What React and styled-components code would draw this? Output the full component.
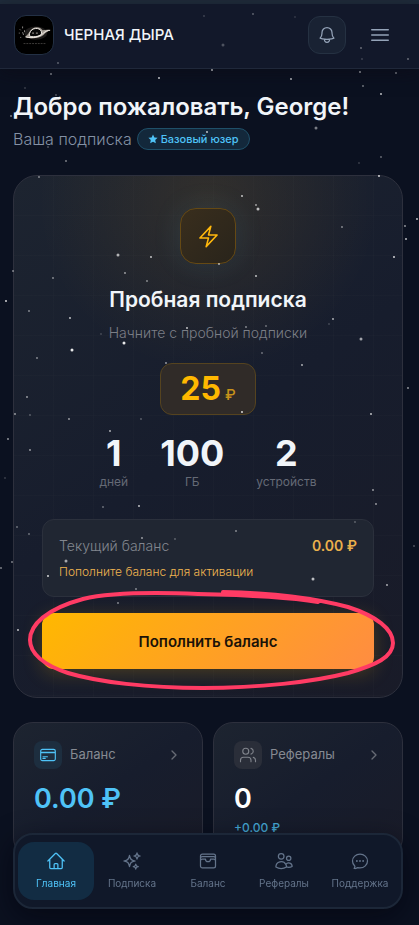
// src/App.jsx
import React from 'react';
import styled, { createGlobalStyle, css } from 'styled-components';
import {
  HiOutlineBell,
  HiOutlineBars3,
  HiOutlineBolt,
  HiOutlineChatBubbleOvalLeftEllipsis,
  HiOutlineCreditCard,
  HiOutlineHome,
  HiOutlineSparkles,
  HiOutlineUsers,
  HiOutlineWallet,
} from 'react-icons/hi2';
import { ChevronRight, Users } from 'lucide-react';

const GlobalStyle = createGlobalStyle`
  *, *::before, *::after {
    box-sizing: border-box;
  }

  body {
    margin: 0;
    background: #0b1120;
    color: #f1f5f9;
    font-family: Inter, 'Noto Sans', sans-serif;
    line-height: 1.5;
  }

  h1, h2, p, dl, dd {
    margin: 0;
  }

  button {
    font-family: inherit;
    cursor: pointer;
  }

  a {
    color: inherit;
    text-decoration: none;
  }
`;

const Page = styled.div`
  border-top: 4px solid #1f2c3b;
  padding-bottom: 110px;
`;

const Sky = styled.svg`
  position: fixed;
  inset: 0;
  z-index: 5;
  width: 100%;
  height: 100%;
  pointer-events: none;
  fill: #fff;
`;

const Header = styled.header`
  display: flex;
  align-items: center;
  height: 65px;
  padding: 0 20px 2px 14px;
  background: #12182a;
  border-bottom: 1px solid #20283a;
  box-shadow: 0 4px 16px rgba(12, 10, 20, 0.5);
`;

const Brand = styled.a`
  display: flex;
  align-items: center;
  gap: 10px;
  margin-right: auto;
  font-size: 15px;
  font-weight: 500;
`;

const Logo = styled.svg`
  width: 40px;
  height: 40px;
  border: 1px solid #233044;
  border-radius: 12px;
  background: #000;
`;

const IconButton = styled.button`
  display: grid;
  place-items: center;
  width: 38px;
  height: 38px;
  padding: 0;
  border: 1px solid ${(props) => (props.$filled ? '#253142' : 'transparent')};
  border-radius: 12px;
  background: ${(props) => (props.$filled ? '#192233' : 'transparent')};
  color: #94a3b8;
  font-size: ${(props) => (props.$filled ? '20px' : '24px')};

  & + & {
    margin-left: 15px;
  }
`;

const Main = styled.main`
  padding: 21px 16px 0 13px;
`;

const Greeting = styled.h1`
  font-size: 24px;
  font-weight: 600;
  line-height: 34px;
`;

const PlanLine = styled.div`
  display: flex;
  align-items: center;
  gap: 5px;
  margin-top: 4px;
  color: #8491a5;
  font-size: 16px;
  font-weight: 300;
  line-height: 22px;
`;

const Badge = styled.span`
  display: inline-flex;
  align-items: center;
  gap: 3px;
  height: 22px;
  padding: 0 10px;
  border: 1px solid #1f5069;
  border-radius: 11px;
  background: #13283b;
  color: #4fc3f7;
  font-size: 11px;
  font-weight: 500;

  svg {
    width: 10px;
    height: 10px;
    fill: currentColor;
  }
`;

const glass = css`
  border: 1px solid #2d303d;
  background: linear-gradient(145deg, #1d2430 0%, #171d2d 50%, #191b28 100%);
`;

const TrialCard = styled.section`
  ${glass}
  display: flex;
  flex-direction: column;
  align-items: center;
  margin-top: 25px;
  padding: 32px 28px 28px;
  border-radius: 24px;
  background:
    repeating-linear-gradient(90deg, transparent 0 39px, rgba(255, 255, 255, 0.01) 39px 40px),
    repeating-linear-gradient(transparent 0 39px, rgba(255, 255, 255, 0.01) 39px 40px),
    radial-gradient(circle at 50% 25px, rgba(255, 170, 20, 0.1), rgba(255, 170, 20, 0) 170px),
    linear-gradient(145deg, #1d2430 0%, #171d2d 50%, #191b28 100%);
`;

const BoltTile = styled.div`
  display: grid;
  place-items: center;
  width: 56px;
  height: 56px;
  border: 1px solid #654914;
  border-radius: 16px;
  background: linear-gradient(135deg, #392e1d, #29241b);
  box-shadow: 0 0 30px rgba(79, 195, 247, 0.1);
  color: #ffb80c;
  font-size: 25px;
`;

const CardTitle = styled.h2`
  margin-top: 20px;
  font-size: 21px;
  font-weight: 600;
  line-height: 32px;
`;

const CardHint = styled.p`
  margin-top: 7px;
  color: #7b7e86;
  font-size: 14px;
  font-weight: 300;
  line-height: 20px;
`;

const Price = styled.p`
  display: flex;
  align-items: baseline;
  gap: 4px;
  margin-top: 20px;
  padding: 0 19px;
  border: 1px solid #55431f;
  border-radius: 12px;
  background: #302b28;
  color: #ffb800;
  font-size: 32px;
  font-weight: 700;
  line-height: 50px;

  small {
    color: #c7921a;
    font-size: 15px;
    font-weight: 500;
    line-height: 16px;
  }
`;

const Stats = styled.dl`
  display: flex;
  justify-content: center;
  gap: 32px;
  margin-top: 18px;
`;

const Stat = styled.div`
  display: flex;
  flex-direction: column-reverse;
  align-items: center;

  dt {
    color: #656a76;
    font-size: 12px;
    line-height: 18px;
  }

  dd {
    font-size: 36px;
    font-weight: 700;
    line-height: 40px;
  }
`;

const BalanceBox = styled.div`
  align-self: stretch;
  margin-top: 28px;
  padding: 15px 16px;
  border: 1px solid #2b303c;
  border-radius: 12px;
  background: #202632;
`;

const BalanceRow = styled.div`
  display: flex;
  justify-content: space-between;
  color: #82868f;
  font-size: 14px;
  font-weight: 300;
  line-height: 22px;

  strong {
    color: #eab04c;
    font-weight: 600;
  }
`;

const Warning = styled.p`
  margin-top: 6px;
  color: #f0b550;
  font-size: 12px;
  font-weight: 300;
  line-height: 18px;
`;

const TopUp = styled.div`
  position: relative;
  align-self: stretch;
  margin-top: 16px;
`;

const TopUpButton = styled.button`
  display: block;
  width: 100%;
  height: 56px;
  border: 0;
  border-radius: 12px;
  background: linear-gradient(135deg, #ffb800, #ff8c42);
  box-shadow: 0 4px 20px rgba(255, 184, 0, 0.22);
  color: #1a1208;
  font-size: 15px;
  font-weight: 600;
`;

const Marker = styled.svg`
  position: absolute;
  top: -26px;
  left: -24px;
  z-index: 6;
  width: calc(100% + 48px);
  height: calc(100% + 52px);
  pointer-events: none;
  fill: none;
  stroke: #ff3b64;
  stroke-width: 4;
  stroke-linecap: round;
`;

const Tiles = styled.div`
  display: grid;
  grid-template-columns: 1fr 1fr;
  gap: 10px;
  margin-top: 24px;
`;

const Tile = styled.a`
  ${glass}
  min-height: 136px;
  padding: 18px 20px;
  border-radius: 20px;
`;

const TileHead = styled.div`
  display: flex;
  align-items: center;
  gap: 8px;
  color: #868a92;
  font-size: 13px;

  > svg {
    margin-left: auto;
    color: #676b75;
  }
`;

const TileIcon = styled.span`
  display: grid;
  place-items: center;
  width: 28px;
  height: 28px;
  border-radius: 8px;
  background: ${(props) => (props.$accent ? '#1d2e3f' : '#2a2e39')};
  color: ${(props) => (props.$accent ? '#4fc3f7' : '#80848c')};
  font-size: 18px;
`;

const TileValue = styled.p`
  margin-top: 12px;
  color: ${(props) => (props.$accent ? '#4fc3f7' : '#fff')};
  font-size: 27px;
  font-weight: 600;
  line-height: 36px;
`;

const TileNote = styled.p`
  margin-top: 1px;
  color: #45a8d5;
  font-size: 12px;
  font-weight: 500;
  line-height: 20px;
`;

const Nav = styled.nav`
  position: fixed;
  right: 16px;
  bottom: 16px;
  left: 13px;
  z-index: 10;
  display: grid;
  grid-template-columns: repeat(5, 1fr);
  padding: 7px 3px;
  border: 2px solid #1c2738;
  border-radius: 20px;
  background: #101829;
  box-shadow: 0 8px 28px rgba(4, 4, 14, 0.6);
`;

const NavLink = styled.a`
  display: flex;
  flex-direction: column;
  align-items: center;
  justify-content: center;
  gap: 4px;
  height: 58px;
  border-radius: 16px;
  background: ${(props) => (props.$active ? '#122c43' : 'transparent')};
  color: ${(props) => (props.$active ? '#4fc3f7' : '#64748b')};
  font-size: 10px;
  line-height: 16px;

  svg {
    width: 20px;
    height: 20px;
  }
`;

// x, y, size, opacity
const stars = [
  [253, 14, 1, 0.35], [223, 45, 2, 0.25], [204, 16, 1, 0.2], [295, 17, 1, 0.15], [361, 48, 1, 0.4],
  [362, 59, 1, 0.2], [408, 59, 1, 0.4], [58, 63, 1, 0.35], [51, 74, 1, 0.45], [212, 70, 1, 0.65],
  [360, 72, 1, 0.5], [396, 73, 1, 0.4], [159, 78, 1, 0.8], [291, 79, 1, 0.7], [363, 86, 1, 0.45],
  [381, 94, 1, 0.8], [25, 88, 1, 0.2], [56, 95, 1, 0.3], [11, 116, 1, 0.5], [51, 108, 1, 0.7],
  [316, 128, 2, 0.45], [207, 132, 1, 0.8], [48, 147, 1, 0.3], [381, 157, 1, 0.4], [66, 161, 1, 0.5],
  [359, 163, 1, 0.2], [39, 177, 1, 0.5], [379, 176, 1, 0.9], [242, 196, 1, 0.8], [256, 205, 1, 0.6],
  [258, 209, 2, 0.7], [342, 227, 1, 0.5], [417, 219, 1, 0.8], [405, 226, 1, 0.6], [406, 239, 1, 0.8],
  [394, 257, 1, 0.9], [118, 255, 2, 0.65], [151, 257, 1, 0.8], [125, 273, 1, 0.6], [147, 281, 1, 0.5],
  [219, 264, 1, 0.7], [256, 276, 1, 0.8], [13, 271, 1, 0.5], [53, 278, 1, 0.5], [6, 301, 1, 0.9],
  [29, 311, 1, 0.5], [70, 318, 1, 0.8], [187, 328, 1, 0.8], [101, 334, 1, 0.2], [246, 327, 1, 0.5],
  [266, 326, 1, 0.4], [333, 319, 1, 0.7], [329, 324, 1, 0.2], [361, 339, 2, 0.6], [124, 343, 2, 0.9],
  [72, 350, 2, 0.9], [37, 358, 1, 0.5], [262, 353, 1, 0.4], [166, 363, 1, 0.6], [302, 365, 1, 0.7],
  [27, 397, 1, 0.6], [30, 415, 1, 0.3], [15, 414, 1, 0.6], [69, 419, 1, 0.6], [141, 419, 1, 0.3],
  [242, 412, 1, 0.9], [371, 414, 1, 0.8], [408, 388, 1, 0.6], [110, 431, 1, 0.7], [8, 439, 1, 0.6],
  [30, 450, 1, 0.6], [5, 478, 1, 0.2], [373, 490, 1, 0.6], [376, 504, 1, 0.6], [103, 507, 1, 0.4],
  [139, 506, 1, 0.8], [17, 527, 1, 0.4], [29, 534, 1, 0.4], [236, 531, 1, 0.5], [355, 522, 1, 0.3],
  [142, 538, 1, 0.6], [175, 539, 1, 0.3], [414, 546, 1, 0.3], [66, 561, 2, 0.6], [12, 562, 1, 0.5],
  [48, 576, 1, 0.9], [136, 589, 1, 0.5], [118, 603, 1, 0.5], [313, 579, 2, 0.7], [387, 585, 1, 0.7],
  [1, 568, 1, 0.5], [18, 630, 1, 0.8],
];

const stats = [
  { value: '1', label: 'дней' },
  { value: '100', label: 'ГБ' },
  { value: '2', label: 'устройств' },
];

const links = [
  { label: 'Главная', icon: HiOutlineHome, active: true },
  { label: 'Подписка', icon: HiOutlineSparkles },
  { label: 'Баланс', icon: HiOutlineWallet },
  { label: 'Рефералы', icon: HiOutlineUsers },
  { label: 'Поддержка', icon: HiOutlineChatBubbleOvalLeftEllipsis },
];

const BlackHoleLogo = () => (
  <Logo viewBox="0 0 40 40" aria-hidden="true">
    <ellipse cx="22" cy="18" rx="12" ry="7" fill="#1d1b1a" />
    <path d="M11 22c1-2 3-3 4-5 3-6 11-7 14-2 2 0 5-1 8 0-3 1-5 3-7 5-5 4-13 4-19 2z" fill="#a39c94" />
    <path d="M15 21c0-10 13-10 13-3 0 3-8 5-13 3z" fill="#080808" stroke="#eeeae4" />
    <path d="M11 22c8 2 15 0 19-4 2-2 5-3 7-3" fill="none" stroke="#f4eee8" />
    <path d="M5 14l1 1M8 11v2M4 18h1M8 17l1 3M6 22v1M10 15v2" stroke="#8b8885" />
    <path d="M18 18h2M22 18h2" stroke="#b3aca5" />
    <path d="M9 29h23" stroke="#3f3d3b" strokeDasharray="2 1" />
  </Logo>
);

const App = () => {
  return (
    <>
      <GlobalStyle />
      <Sky aria-hidden="true">
        {stars.map(([x, y, size, opacity]) => (
          <circle key={`${x}-${y}`} cx={x} cy={y} r={size === 2 ? 1.5 : 0.9} opacity={opacity} />
        ))}
      </Sky>
      <Page>
        <Header>
          <Brand href="#home">
            <BlackHoleLogo />
            ЧЕРНАЯ ДЫРА
          </Brand>
          <IconButton $filled type="button" aria-label="Уведомления">
            <HiOutlineBell />
          </IconButton>
          <IconButton type="button" aria-label="Меню">
            <HiOutlineBars3 />
          </IconButton>
        </Header>

        <Main>
          <Greeting>Добро пожаловать, George!</Greeting>
          <PlanLine>
            Ваша подписка
            <Badge>
              <svg viewBox="0 0 24 24" aria-hidden="true">
                <path d="M12 1l3.3 7.2 7.7.9-5.7 5.3 1.5 7.7L12 18.3 5.2 22.1l1.5-7.7L1 9.1l7.7-.9z" />
              </svg>
              Базовый юзер
            </Badge>
          </PlanLine>

          <TrialCard>
            <BoltTile>
              <HiOutlineBolt />
            </BoltTile>
            <CardTitle>Пробная подписка</CardTitle>
            <CardHint>Начните с пробной подписки</CardHint>
            <Price>
              25<small>₽</small>
            </Price>
            <Stats>
              {stats.map((stat) => (
                <Stat key={stat.label}>
                  <dt>{stat.label}</dt>
                  <dd>{stat.value}</dd>
                </Stat>
              ))}
            </Stats>
            <BalanceBox>
              <BalanceRow>
                <span>Текущий баланс</span>
                <strong>0.00 ₽</strong>
              </BalanceRow>
              <Warning>Пополните баланс для активации</Warning>
            </BalanceBox>
            <TopUp>
              <TopUpButton type="button">Пополнить баланс</TopUpButton>
              <Marker viewBox="0 0 380 108" preserveAspectRatio="none" aria-hidden="true">
                <path d="M205 5C255 6 300 12 330 20C358 29 375 42 375 56C375 70 358 78 330 86C295 95 240 101 185 101C130 101 80 95 50 86C25 78 12 66 12 53C12 38 28 22 65 12C90 6 130 5 180 7C230 8 270 10 300 15" />
              </Marker>
            </TopUp>
          </TrialCard>

          <Tiles>
            <Tile href="#balance">
              <TileHead>
                <TileIcon $accent>
                  <HiOutlineCreditCard />
                </TileIcon>
                Баланс
                <ChevronRight size={16} />
              </TileHead>
              <TileValue $accent>0.00 ₽</TileValue>
            </Tile>
            <Tile href="#referrals">
              <TileHead>
                <TileIcon>
                  <Users size={18} strokeWidth={1.5} />
                </TileIcon>
                Рефералы
                <ChevronRight size={16} />
              </TileHead>
              <TileValue>0</TileValue>
              <TileNote>+0.00 ₽</TileNote>
            </Tile>
          </Tiles>
        </Main>

        <Nav>
          {links.map(({ label, icon: Icon, active }) => (
            <NavLink key={label} href="#nav" $active={active} aria-current={active ? 'page' : undefined}>
              <Icon />
              {label}
            </NavLink>
          ))}
        </Nav>
      </Page>
    </>
  );
};

export default App;
